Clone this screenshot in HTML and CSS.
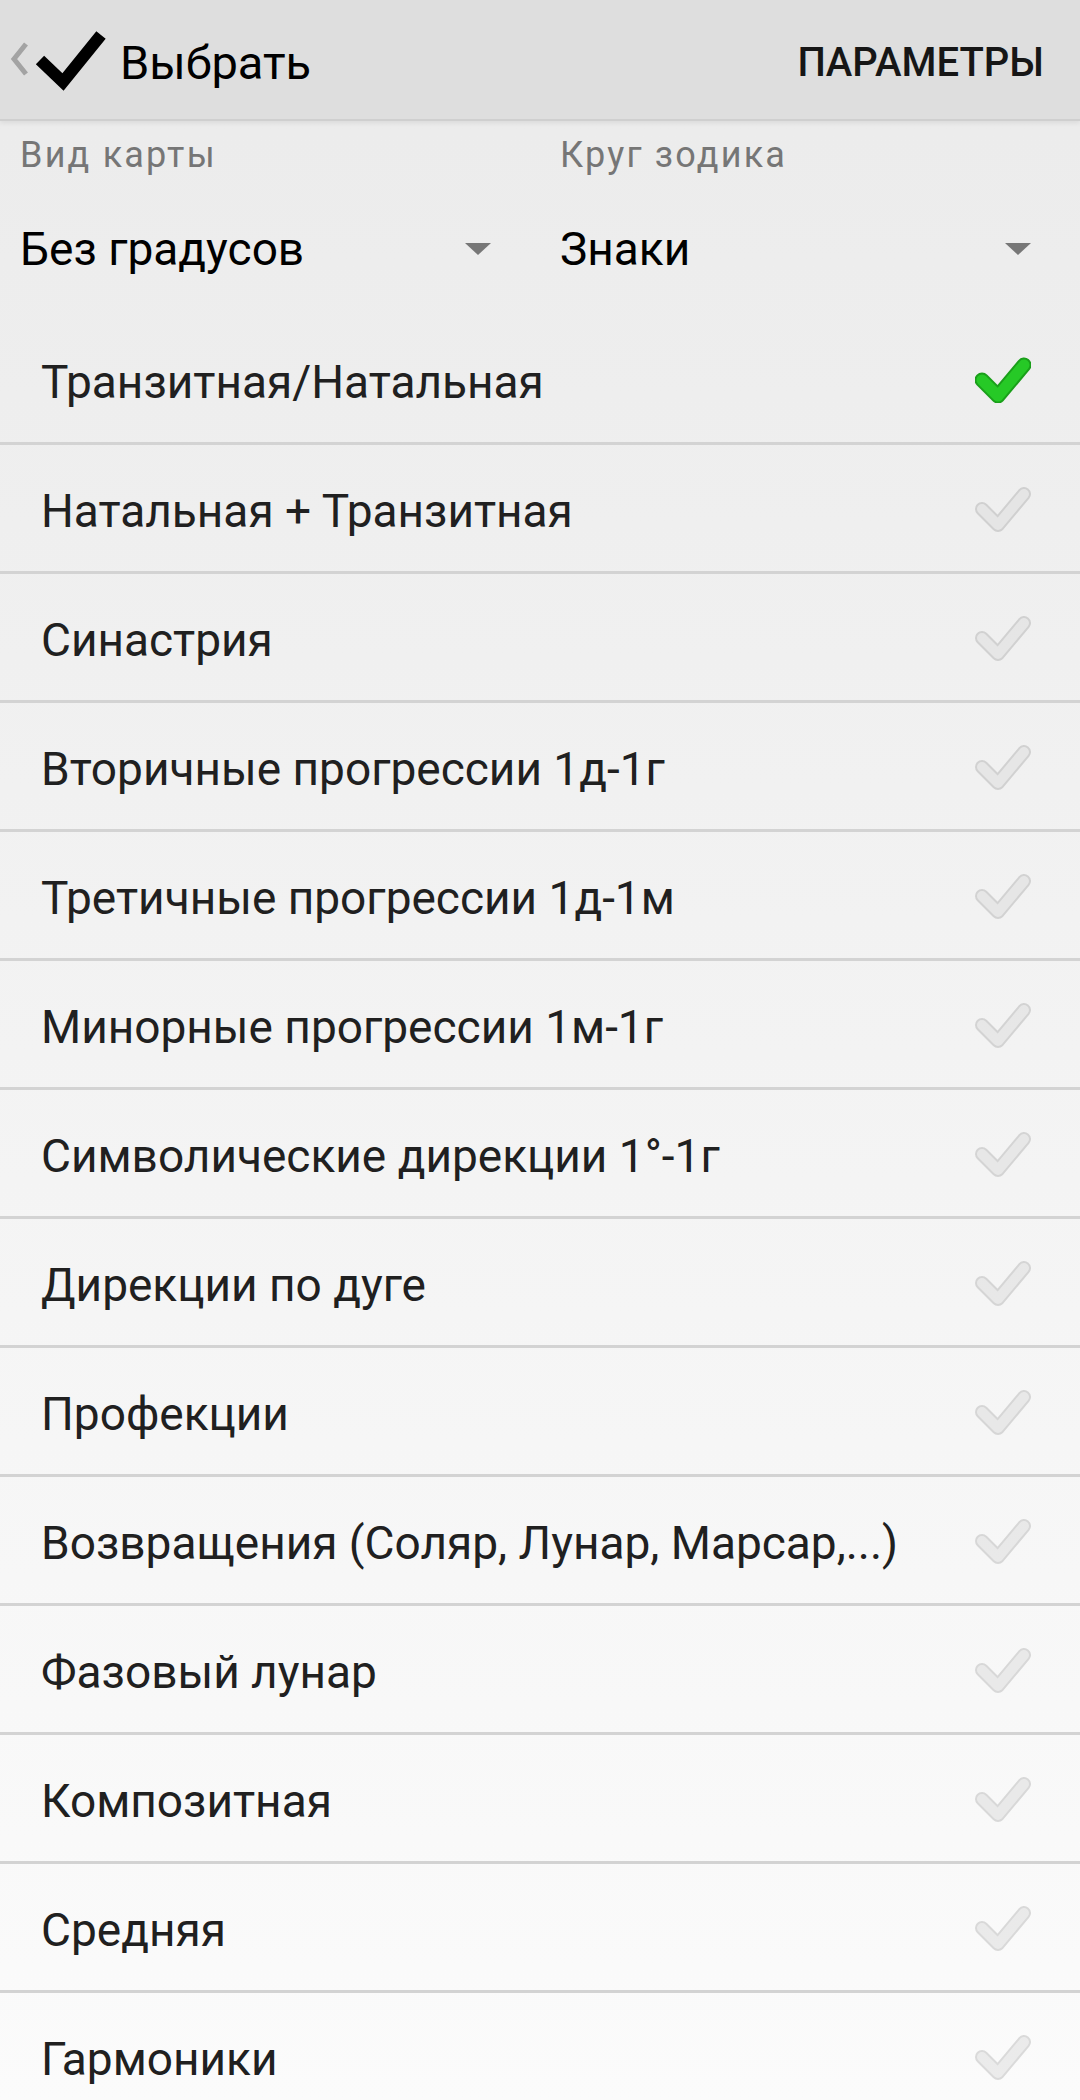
FILE: index.html
```html
<!DOCTYPE html>
<html lang="ru">
<head>
    <meta charset="UTF-8">
    <meta name="viewport" content="width=device-width, initial-scale=1.0">
    <title>Выбрать</title>
    <link rel="stylesheet" href="styles.css">
</head>
<body>
    <header class="toolbar">
        <div class="toolbar-left">
            <svg class="back" width="22" height="40" viewBox="0 0 22 40">
                <polyline points="17,4 5,19 17,34" />
            </svg>
            <svg class="done" width="74" height="62" viewBox="0 0 74 62">
                <polyline points="8,31 31,53 69,6" />
            </svg>
            <span class="title">Выбрать</span>
        </div>
        <button class="action">ПАРАМЕТРЫ</button>
    </header>

    <section class="filters">
        <div class="filter">
            <div class="filter-label">Вид карты</div>
            <div class="filter-value">
                <span>Без градусов</span>
                <span class="caret"></span>
            </div>
        </div>
        <div class="filter">
            <div class="filter-label">Круг зодика</div>
            <div class="filter-value">
                <span>Знаки</span>
                <span class="caret"></span>
            </div>
        </div>
    </section>

    <ul class="chart-list">
        <li class="chart-item selected">
            <span class="chart-name">Транзитная/Натальная</span>
            <svg class="tick" width="56" height="48" viewBox="0 0 56 48"><polyline class="tick-edge" points="7,25 23,41 49,10" /><polyline class="tick-fill" points="7,25 23,41 49,10" /></svg>
        </li>
        <li class="chart-item">
            <span class="chart-name">Натальная + Транзитная</span>
            <svg class="tick" width="56" height="48" viewBox="0 0 56 48"><polyline class="tick-edge" points="7,25 23,41 49,10" /><polyline class="tick-fill" points="7,25 23,41 49,10" /></svg>
        </li>
        <li class="chart-item">
            <span class="chart-name">Синастрия</span>
            <svg class="tick" width="56" height="48" viewBox="0 0 56 48"><polyline class="tick-edge" points="7,25 23,41 49,10" /><polyline class="tick-fill" points="7,25 23,41 49,10" /></svg>
        </li>
        <li class="chart-item">
            <span class="chart-name">Вторичные прогрессии 1д-1г</span>
            <svg class="tick" width="56" height="48" viewBox="0 0 56 48"><polyline class="tick-edge" points="7,25 23,41 49,10" /><polyline class="tick-fill" points="7,25 23,41 49,10" /></svg>
        </li>
        <li class="chart-item">
            <span class="chart-name">Третичные прогрессии 1д-1м</span>
            <svg class="tick" width="56" height="48" viewBox="0 0 56 48"><polyline class="tick-edge" points="7,25 23,41 49,10" /><polyline class="tick-fill" points="7,25 23,41 49,10" /></svg>
        </li>
        <li class="chart-item">
            <span class="chart-name">Минорные прогрессии 1м-1г</span>
            <svg class="tick" width="56" height="48" viewBox="0 0 56 48"><polyline class="tick-edge" points="7,25 23,41 49,10" /><polyline class="tick-fill" points="7,25 23,41 49,10" /></svg>
        </li>
        <li class="chart-item">
            <span class="chart-name">Символические дирекции 1°-1г</span>
            <svg class="tick" width="56" height="48" viewBox="0 0 56 48"><polyline class="tick-edge" points="7,25 23,41 49,10" /><polyline class="tick-fill" points="7,25 23,41 49,10" /></svg>
        </li>
        <li class="chart-item">
            <span class="chart-name">Дирекции по дуге</span>
            <svg class="tick" width="56" height="48" viewBox="0 0 56 48"><polyline class="tick-edge" points="7,25 23,41 49,10" /><polyline class="tick-fill" points="7,25 23,41 49,10" /></svg>
        </li>
        <li class="chart-item">
            <span class="chart-name">Профекции</span>
            <svg class="tick" width="56" height="48" viewBox="0 0 56 48"><polyline class="tick-edge" points="7,25 23,41 49,10" /><polyline class="tick-fill" points="7,25 23,41 49,10" /></svg>
        </li>
        <li class="chart-item">
            <span class="chart-name">Возвращения (Соляр, Лунар, Марсар,...)</span>
            <svg class="tick" width="56" height="48" viewBox="0 0 56 48"><polyline class="tick-edge" points="7,25 23,41 49,10" /><polyline class="tick-fill" points="7,25 23,41 49,10" /></svg>
        </li>
        <li class="chart-item">
            <span class="chart-name">Фазовый лунар</span>
            <svg class="tick" width="56" height="48" viewBox="0 0 56 48"><polyline class="tick-edge" points="7,25 23,41 49,10" /><polyline class="tick-fill" points="7,25 23,41 49,10" /></svg>
        </li>
        <li class="chart-item">
            <span class="chart-name">Композитная</span>
            <svg class="tick" width="56" height="48" viewBox="0 0 56 48"><polyline class="tick-edge" points="7,25 23,41 49,10" /><polyline class="tick-fill" points="7,25 23,41 49,10" /></svg>
        </li>
        <li class="chart-item">
            <span class="chart-name">Средняя</span>
            <svg class="tick" width="56" height="48" viewBox="0 0 56 48"><polyline class="tick-edge" points="7,25 23,41 49,10" /><polyline class="tick-fill" points="7,25 23,41 49,10" /></svg>
        </li>
        <li class="chart-item">
            <span class="chart-name">Гармоники</span>
            <svg class="tick" width="56" height="48" viewBox="0 0 56 48"><polyline class="tick-edge" points="7,25 23,41 49,10" /><polyline class="tick-fill" points="7,25 23,41 49,10" /></svg>
        </li>
    </ul>
</body>
</html>
```

FILE: styles.css
```css
body {
    margin: 0;
    padding: 0;
    height: 2100px;
    overflow: hidden;
    font-family: Roboto, "Noto Sans", sans-serif;
    color: #1f1f1f;
    background: linear-gradient(#ebebeb, #fbfbfb);
}

.toolbar {
    position: relative;
    z-index: 2;
    height: 121px;
    box-sizing: border-box;
    padding: 6px 36px 0 0;
    display: flex;
    align-items: center;
    justify-content: space-between;
    background: #dedede;
    border-bottom: 2px solid #cfcfcf;
    box-shadow: 0 2px 5px rgba(0, 0, 0, 0.08);
}

.toolbar-left {
    display: flex;
    align-items: center;
}

.back {
    margin-left: 9px;
    margin-top: -6px;
}

.back polyline {
    fill: none;
    stroke: #a3a3a3;
    stroke-width: 5;
}

.done {
    margin-left: 1px;
    margin-top: -6px;
}

.done polyline {
    fill: none;
    stroke: #000000;
    stroke-width: 12;
    stroke-linejoin: miter;
}

.title {
    margin-left: 14px;
    font-size: 47px;
    color: #000000;
    line-height: 54px;
}

.action {
    padding: 0;
    border: none;
    background: none;
    font-family: inherit;
    font-size: 40px;
    font-weight: 500;
    color: #161616;
    line-height: 50px;
}

.filters {
    display: grid;
    grid-template-columns: 1fr 1fr;
    padding: 14px 0 37px;
}

.filter {
    padding: 0 49px 0 20px;
}

.filter-label {
    font-size: 36px;
    letter-spacing: 2.2px;
    line-height: 40px;
    color: #767676;
}

.filter-value {
    margin-top: 44px;
    height: 60px;
    display: flex;
    align-items: center;
    justify-content: space-between;
    font-size: 46px;
    color: #000000;
}

.caret {
    width: 0;
    height: 0;
    border-left: 13px solid transparent;
    border-right: 13px solid transparent;
    border-top: 12px solid #777777;
}

.chart-list {
    list-style: none;
    margin: 0;
    padding: 0;
}

.chart-item {
    height: 126px;
    padding: 0 49px 0 41px;
    display: flex;
    align-items: center;
    justify-content: space-between;
    border-bottom: 3px solid #d3d3d3;
}

.chart-name {
    padding-top: 6px;
    font-size: 46px;
    line-height: 54px;
    color: #202020;
}

.tick polyline {
    fill: none;
    stroke-linecap: round;
    stroke-linejoin: round;
}

.tick-edge {
    stroke: rgba(0, 0, 0, 0.13);
    stroke-width: 14;
}

.tick-fill {
    stroke: rgba(255, 255, 255, 0.45);
    stroke-width: 10;
}

.selected .tick-edge {
    stroke: #1a9f1a;
    stroke-width: 15;
}

.selected .tick-fill {
    stroke: #26c926;
    stroke-width: 11;
}
```
